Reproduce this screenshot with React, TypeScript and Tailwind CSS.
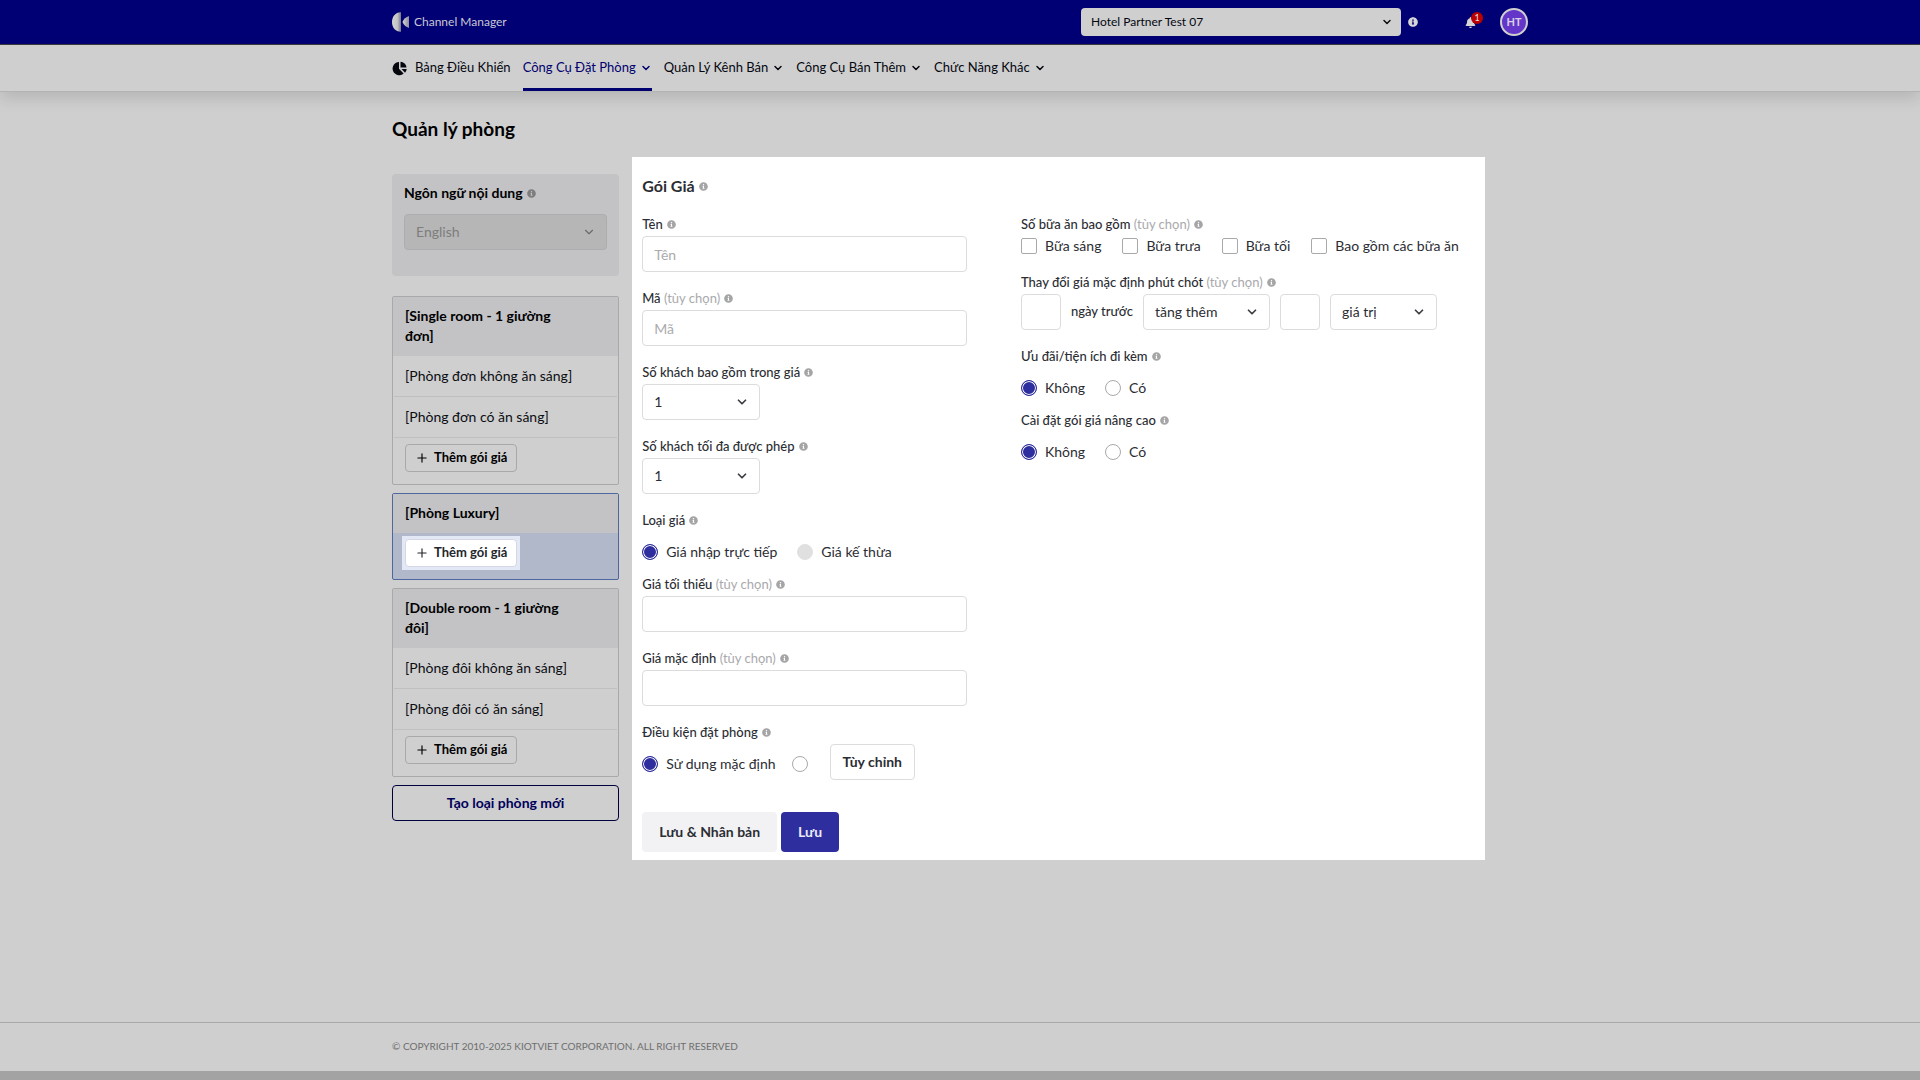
import { useState } from 'react';
import type { ReactNode } from 'react';
import { FaBell, FaInfoCircle } from 'react-icons/fa';
import { ChevronDown, Plus } from 'lucide-react';

interface Room {
  name: string;
  packages: string[];
  active?: boolean;
}

const NAV_ITEMS = [
  { label: 'Công Cụ Đặt Phòng', active: true },
  { label: 'Quản Lý Kênh Bán' },
  { label: 'Công Cụ Bán Thêm' },
  { label: 'Chức Năng Khác' },
];

const ROOMS: Room[] = [
  {
    name: '[Single room - 1 giường đơn]',
    packages: ['[Phòng đơn không ăn sáng]', '[Phòng đơn có ăn sáng]'],
  },
  { name: '[Phòng Luxury]', packages: [], active: true },
  {
    name: '[Double room - 1 giường đôi]',
    packages: ['[Phòng đôi không ăn sáng]', '[Phòng đôi có ăn sáng]'],
  },
];

const MEALS = ['Bữa sáng', 'Bữa trưa', 'Bữa tối', 'Bao gồm các bữa ăn'];

const inputClass =
  'h-9 w-full rounded border border-[#dcdcde] bg-white px-[11px] text-sm text-[#2b2d33] placeholder:text-[#ababae]';

const radioClass =
  'size-4 shrink-0 appearance-none rounded-full border border-[#a9a9ac] bg-white checked:border-[#2f2e9f] checked:bg-[#2f2e9f] checked:shadow-[inset_0_0_0_1px_#ffffff] disabled:border-[#e0e0e0] disabled:bg-[#e0e0e0]';

function Logo() {
  return (
    <a href="#" className="flex items-center gap-1 text-[#c9c9d2]" aria-label="Channel Manager">
      <svg width="18" height="20" viewBox="0 0 18 20">
        <defs>
          <linearGradient id="logo-left" x1="0" x2="1">
            <stop offset="0" stopColor="#d4d4d4" />
            <stop offset="0.6" stopColor="#c4c4c4" />
            <stop offset="1" stopColor="#77778c" />
          </linearGradient>
          <linearGradient id="logo-right" x1="0" x2="1">
            <stop offset="0" stopColor="#d8d8d8" />
            <stop offset="1" stopColor="#8d8d9c" />
          </linearGradient>
        </defs>
        <path d="M9 0.200C3.500 0 0 4.500 0 10s3.500 10 9 9.800z" fill="url(#logo-left)" />
        <path d="M17 4C14 4.800 11.500 7.500 10.500 10c1 2.500 3.500 5.200 6.500 6z" fill="url(#logo-right)" />
      </svg>
      <span className="text-xs leading-5">Channel Manager</span>
    </a>
  );
}

function PieIcon() {
  return (
    <svg width="15" height="15" viewBox="0 0 15 15" fill="#05070f">
      <path d="M7 1v6.800l4.600 4.700A6.600 6.600 0 1 1 7 1z" />
      <path d="M8.500 0.800A6.300 6.300 0 0 1 14.500 6.600H8.500z" />
      <path d="M9.500 8h5.200a6.200 6.200 0 0 1-1.700 3.700z" />
    </svg>
  );
}

function Info() {
  return <FaInfoCircle className="size-[9px] shrink-0 text-[#a5a5a7]" />;
}

interface FieldLabelProps {
  text: string;
  optional?: boolean;
  htmlFor?: string;
}

function FieldLabel({ text, optional, htmlFor }: FieldLabelProps) {
  return (
    <div className="mb-[2px] flex items-center gap-1 text-[13px] leading-5">
      <label htmlFor={htmlFor} className="font-medium text-[#2b2d33]">
        {text}
        {optional && <span className="font-normal text-[#a9a9ac]"> (tùy chọn)</span>}
      </label>
      <Info />
    </div>
  );
}

interface SelectBoxProps {
  id?: string;
  label?: string;
  className?: string;
  options: string[];
}

function SelectBox({ id, label, className = '', options }: SelectBoxProps) {
  return (
    <div className={'relative ' + className}>
      <select id={id} aria-label={label} className={inputClass + ' appearance-none'}>
        {options.map((option) => (
          <option key={option}>{option}</option>
        ))}
      </select>
      <ChevronDown
        strokeWidth={3}
        className="pointer-events-none absolute right-[11px] top-1/2 size-[14px] -translate-y-1/2 text-[#3c3e44]"
      />
    </div>
  );
}

interface RadioProps {
  name: string;
  label: string;
  defaultChecked?: boolean;
  disabled?: boolean;
}

function Radio({ name, label, defaultChecked, disabled }: RadioProps) {
  return (
    <label className="flex items-center gap-2 text-sm leading-6 text-[#2b2d33]">
      <input type="radio" name={name} defaultChecked={defaultChecked} disabled={disabled} className={radioClass} />
      {label}
    </label>
  );
}

function YesNoField({ name, text }: { name: string; text: string }) {
  return (
    <div className="mb-[10px]">
      <FieldLabel text={text} />
      <div className="flex gap-5 pt-2">
        <Radio name={name} label="Không" defaultChecked />
        <Radio name={name} label="Có" />
      </div>
    </div>
  );
}

function Field({ children }: { children: ReactNode }) {
  return <div className="mb-4">{children}</div>;
}

function AddPackageButton({ highlighted }: { highlighted?: boolean }) {
  return (
    <button
      type="button"
      className={
        highlighted
          ? 'flex h-7 items-center gap-[5px] rounded border border-[#d5d8e4] bg-white px-[9px] text-[13px] font-bold text-[#24262c]'
          : 'flex h-7 items-center gap-[5px] rounded border border-[#a9a9ab] px-[9px] text-[13px] font-bold text-black'
      }
    >
      <Plus className="size-[14px]" />
      Thêm gói giá
    </button>
  );
}

function RoomCard({ room }: { room: Room }) {
  return (
    <div
      className={
        room.active
          ? 'mb-2 rounded-xs border border-[#4f679f] bg-[#b1b8ca]'
          : 'mb-2 rounded-xs border border-[#a9a9ab]'
      }
    >
      <h3 className="bg-[#c3c3c5] pb-[10px] pl-3 pr-10 pt-[9px] text-sm font-bold leading-5 text-black">
        {room.name}
      </h3>
      {room.packages.map((item) => (
        <a
          key={item}
          href="#"
          className="mx-px block border-b border-[#c0c0c0] py-[10px] pl-[11px] text-sm leading-5 text-[#0c0d12]"
        >
          {item}
        </a>
      ))}
      <div className="flex px-3 pb-3 pt-[6px]">
        {room.active ? (
          <div className="-m-[3px] bg-[#e3e8f7] p-[3px]">
            <AddPackageButton highlighted />
          </div>
        ) : (
          <AddPackageButton />
        )}
      </div>
    </div>
  );
}

export default function App() {
  const [name, setName] = useState('');
  const [code, setCode] = useState('');

  return (
    <div className="flex min-h-screen flex-col bg-[#cfcfcf] font-['Lato','Noto_Sans',sans-serif]">
      {/* Top bar */}
      <header className="border-b border-[#3c3c3c] bg-[#000074]">
        <div className="mx-auto flex h-11 max-w-[1136px] items-center">
          <Logo />
          <div className="relative ml-auto w-80">
            <select
              aria-label="Khách sạn"
              className="h-7 w-full appearance-none rounded bg-[#cfcfcf] px-[10px] text-xs text-[#05070f]"
            >
              <option>Hotel Partner Test 07</option>
            </select>
            <ChevronDown
              strokeWidth={3}
              className="pointer-events-none absolute right-2 top-1/2 size-3 -translate-y-1/2 text-[#101010]"
            />
          </div>
          <FaInfoCircle className="ml-[7px] size-[10px] text-[#d6d6d6]" />
          <button type="button" aria-label="Thông báo" className="relative ml-[46px] mr-[23px] p-px">
            <FaBell className="size-[11px] text-[#d6d6d6]" />
            <span className="absolute -top-1 left-[7px] flex size-3 items-center justify-center rounded-full bg-[#bb0000] text-[9px] leading-none text-[#e0e0e0]">
              1
            </span>
          </button>
          <button
            type="button"
            className="flex size-7 items-center justify-center rounded-full border-2 border-[#cfcfcf] bg-[#6435c9] text-[11px] font-bold text-[#d6d0e6]"
          >
            HT
          </button>
        </div>
      </header>

      {/* Main navigation */}
      <nav className="border-b border-[#b4b4b4] shadow-[0_6px_16px_rgba(0,0,0,0.13)]">
        <div className="mx-auto flex h-[46px] max-w-[1136px] gap-3 text-[13px] text-[#05070f]">
          <a href="#" className="flex items-center gap-2">
            <PieIcon />
            Bảng Điều Khiển
          </a>
          {NAV_ITEMS.map((item) => (
            <a
              key={item.label}
              href="#"
              className={
                item.active
                  ? 'flex items-center gap-1 border-y-3 border-t-transparent border-b-[#00006e] text-[#00006e]'
                  : 'flex items-center gap-1'
              }
            >
              {item.label}
              <ChevronDown strokeWidth={3} className="size-3" />
            </a>
          ))}
        </div>
      </nav>

      <main className="mx-auto w-full max-w-[1136px] flex-1">
        <h1 className="pb-4 pt-[25px] text-[19px] font-bold leading-6 text-black">Quản lý phòng</h1>

        <div className="flex items-start gap-[13px]">
          {/* Room list */}
          <aside className="w-1/5 shrink-0 pt-[17px]">
            <div className="mb-5 rounded bg-[#c3c3c5] px-3 pb-[26px] pt-[9px]">
              <div className="mb-[11px] flex items-center gap-1 text-sm font-bold leading-5 text-black">
                <label htmlFor="language">Ngôn ngữ nội dung</label>
                <FaInfoCircle className="size-[9px] text-[#7d7d7d]" />
              </div>
              <div className="relative">
                <select
                  id="language"
                  disabled
                  className="h-9 w-full appearance-none rounded border border-[#adadaf] bg-[#b6b6b6] px-[11px] text-sm text-[#7d7d7d] opacity-100"
                >
                  <option>English</option>
                </select>
                <ChevronDown
                  strokeWidth={2}
                  className="pointer-events-none absolute right-[11px] top-1/2 size-[14px] -translate-y-1/2 text-[#6c6c6c]"
                />
              </div>
            </div>

            {ROOMS.map((room) => (
              <RoomCard key={room.name} room={room} />
            ))}

            <button
              type="button"
              className="h-9 w-full rounded border border-[#00003c] text-sm font-bold text-[#00005a]"
            >
              Tạo loại phòng mới
            </button>
          </aside>

          {/* Rate package form */}
          <form className="min-w-0 flex-1 bg-white px-[10px] pb-2 pt-[17px] mr-[43px]" onSubmit={(e) => e.preventDefault()}>
            <h2 className="mb-4 flex items-center gap-1 text-base font-bold leading-6 text-[#2b2d33]">
              Gói Giá <Info />
            </h2>

            <div className="flex gap-[54px]">
              <div className="w-[39%] shrink-0">
                <Field>
                  <FieldLabel text="Tên" htmlFor="name" />
                  <input
                    id="name"
                    placeholder="Tên"
                    value={name}
                    onChange={(e) => setName(e.target.value)}
                    className={inputClass}
                  />
                </Field>
                <Field>
                  <FieldLabel text="Mã" optional htmlFor="code" />
                  <input
                    id="code"
                    placeholder="Mã"
                    value={code}
                    onChange={(e) => setCode(e.target.value)}
                    className={inputClass}
                  />
                </Field>
                <Field>
                  <FieldLabel text="Số khách bao gồm trong giá" htmlFor="included" />
                  <SelectBox id="included" className="w-[118px]" options={['1', '2', '3', '4']} />
                </Field>
                <Field>
                  <FieldLabel text="Số khách tối đa được phép" htmlFor="max" />
                  <SelectBox id="max" className="w-[118px]" options={['1', '2', '3', '4']} />
                </Field>
                <div className="mb-[10px]">
                  <FieldLabel text="Loại giá" />
                  <div className="flex gap-5 pt-2">
                    <Radio name="rate-type" label="Giá nhập trực tiếp" defaultChecked />
                    <Radio name="rate-type" label="Giá kế thừa" disabled />
                  </div>
                </div>
                <Field>
                  <FieldLabel text="Giá tối thiểu" optional htmlFor="min-price" />
                  <input id="min-price" className={inputClass} />
                </Field>
                <Field>
                  <FieldLabel text="Giá mặc định" optional htmlFor="default-price" />
                  <input id="default-price" className={inputClass} />
                </Field>
                <FieldLabel text="Điều kiện đặt phòng" />
                <div className="flex items-end">
                  <div className="flex items-center gap-4 pb-1">
                    <Radio name="policy" label="Sử dụng mặc định" defaultChecked />
                    <input type="radio" name="policy" aria-label="Tùy chỉnh" className={radioClass} />
                  </div>
                  <button
                    type="button"
                    className="ml-[22px] h-9 rounded border border-[#dcdcde] px-3 text-sm font-bold text-[#2b2d33]"
                  >
                    Tùy chỉnh
                  </button>
                </div>
              </div>

              <div className="min-w-0 flex-1">
                <Field>
                  <FieldLabel text="Số bữa ăn bao gồm" optional />
                  <div className="flex gap-[21px] whitespace-nowrap">
                    {MEALS.map((meal) => (
                      <label key={meal} className="flex items-center gap-2 text-sm leading-5 text-[#2b2d33]">
                        <input
                          type="checkbox"
                          className="size-4 shrink-0 appearance-none rounded-xs border border-[#a9a9ac] bg-white checked:bg-[#2f2e9f]"
                        />
                        {meal}
                      </label>
                    ))}
                  </div>
                </Field>
                <Field>
                  <FieldLabel text="Thay đổi giá mặc định phút chót" optional htmlFor="days" />
                  <div className="flex items-center gap-[10px]">
                    <div className="w-10">
                      <input id="days" className={inputClass} />
                    </div>
                    <span className="text-[13px] font-medium text-[#2b2d33]">ngày trước</span>
                    <SelectBox label="Kiểu thay đổi" className="w-[127px]" options={['tăng thêm', 'giảm']} />
                    <div className="w-10">
                      <input aria-label="Mức thay đổi" className={inputClass} />
                    </div>
                    <SelectBox label="Đơn vị" className="w-[107px]" options={['giá trị', '%']} />
                  </div>
                </Field>
                <YesNoField name="perks" text="Ưu đãi/tiện ích đi kèm" />
                <YesNoField name="advanced" text="Cài đặt gói giá nâng cao" />
              </div>
            </div>

            <div className="mt-8 flex gap-1">
              <button type="button" className="h-10 rounded bg-[#f2f2f5] px-[17px] text-sm font-bold text-[#2b2d33]">
                Lưu & Nhân bản
              </button>
              <button type="submit" className="h-10 rounded bg-[#2f2e9f] px-[17px] text-sm font-bold text-[#e9e9f6]">
                Lưu
              </button>
            </div>
          </form>
        </div>
      </main>

      <footer className="border-b-9 border-b-[#a3a3a3] border-t border-t-[#a9a9ab]">
        <p className="mx-auto max-w-[1136px] pb-[15px] pt-[13px] text-[10px] leading-5 text-[#6e6e6e]">
          © COPYRIGHT 2010-2025 KIOTVIET CORPORATION. ALL RIGHT RESERVED
        </p>
      </footer>
    </div>
  );
}
